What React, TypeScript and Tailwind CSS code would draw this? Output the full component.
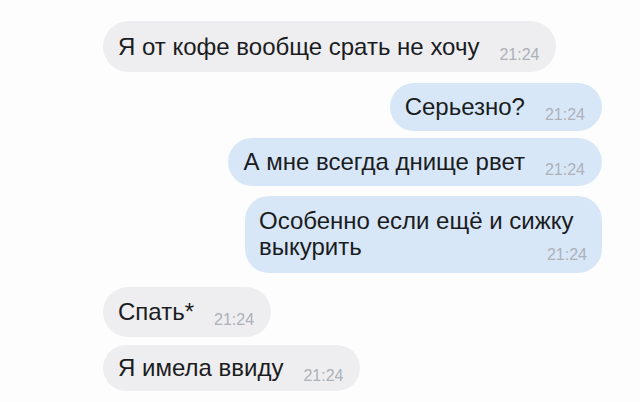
import React from 'react';

type Msg = { text: string; time: string; mine: boolean; gap: string; h: string };

const messages: Msg[] = [
  { text: 'Я от кофе вообще срать не хочу', time: '21:24', mine: false, gap: 'mt-[21px]', h: 'h-[51px]' },
  { text: 'Серьезно?', time: '21:24', mine: true, gap: 'mt-[11px]', h: 'h-[48px]' },
  { text: 'А мне всегда днище рвет', time: '21:24', mine: true, gap: 'mt-[7px]', h: 'h-[48px]' },
];

const tail: Msg[] = [
  { text: 'Спать*', time: '21:24', mine: false, gap: 'mt-[14px]', h: 'h-[50px]' },
  { text: 'Я имела ввиду', time: '21:24', mine: false, gap: 'mt-[8px]', h: 'h-[46px]' },
];

const Bubble: React.FC<{ msg: Msg }> = ({ msg }) => {
  return (
    <div className={`flex ${msg.mine ? 'justify-end pr-[38px]' : 'justify-start pl-[103px]'} ${msg.gap}`}>
      <div
        className={`${msg.h} flex items-center rounded-full pl-[15px] pr-[17px] ${
          msg.mine ? 'bg-[#d8e7f8]' : 'bg-[#eeeef0]'
        }`}
      >
        <div className="flex items-baseline">
          <span className="text-[24px] leading-none text-[#1b1c1e]">{msg.text}</span>
          <span className="ml-[20px] translate-y-[5px] text-[16px] leading-none text-[#adb1b8]">{msg.time}</span>
        </div>
      </div>
    </div>
  );
};

export default function App() {
  return (
    <div
      className="w-[640px] h-[402px] overflow-hidden bg-[#fdfdfd] flex flex-col"
      style={{ fontFamily: '"Liberation Sans", Arial, sans-serif' }}
    >
      {messages.map((m, i) => (
        <Bubble key={i} msg={m} />
      ))}
      <div className="flex justify-end pr-[38px] mt-[10px]">
        <div className="w-[357px] h-[77px] rounded-[24px] bg-[#d8e7f8] pl-[14px] pr-[15px] pt-[12px] flex flex-col">
          <span className="text-[24px] leading-[26px] text-[#1b1c1e]">Особенно если ещё и сижку</span>
          <div className="flex items-baseline justify-between">
            <span className="text-[24px] leading-[26px] text-[#1b1c1e]">выкурить</span>
            <span className="translate-y-[5px] text-[16px] leading-none text-[#adb1b8]">21:24</span>
          </div>
        </div>
      </div>
      {tail.map((m, i) => (
        <Bubble key={i} msg={m} />
      ))}
    </div>
  );
}
